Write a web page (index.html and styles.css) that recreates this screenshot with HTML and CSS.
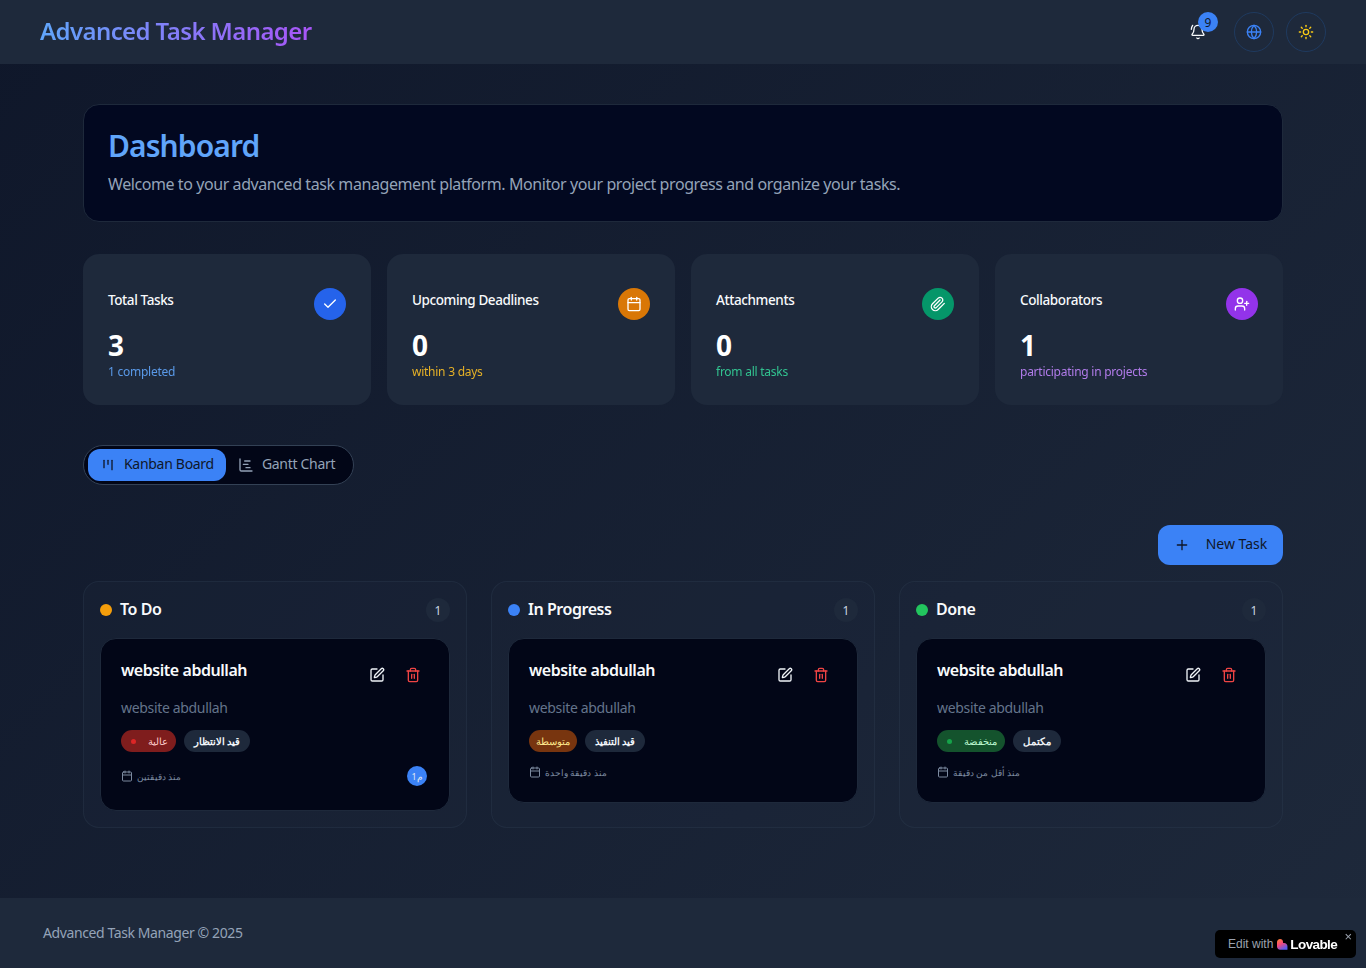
FILE: index.html
```html
<!DOCTYPE html>
<html lang="en">
<head>
  <meta charset="UTF-8" />
  <meta name="viewport" content="width=device-width, initial-scale=1.0" />
  <title>Advanced Task Manager</title>
  <link rel="stylesheet" href="styles.css">
</head>
<body>
  <svg class="sprite" aria-hidden="true">
    <symbol id="i-bell" viewBox="0 0 24 24"><path d="M10.268 21a2 2 0 0 0 3.464 0"/><path d="M22 8c0-2.3-.8-4.3-2-6"/><path d="M3.262 15.326A1 1 0 0 0 4 17h16a1 1 0 0 0 .74-1.673C19.41 13.956 18 12.499 18 8A6 6 0 0 0 6 8c0 4.499-1.411 5.956-2.738 7.326"/><path d="M4 2C2.8 3.7 2 5.7 2 8"/></symbol>
    <symbol id="i-globe" viewBox="0 0 24 24"><circle cx="12" cy="12" r="10"/><path d="M12 2a14.5 14.5 0 0 0 0 20 14.5 14.5 0 0 0 0-20"/><path d="M2 12h20"/></symbol>
    <symbol id="i-sun" viewBox="0 0 24 24"><circle cx="12" cy="12" r="4"/><path d="M12 2v2"/><path d="M12 20v2"/><path d="m4.93 4.93 1.41 1.41"/><path d="m17.66 17.66 1.41 1.41"/><path d="M2 12h2"/><path d="M20 12h2"/><path d="m6.34 17.66-1.41 1.41"/><path d="m19.07 4.93-1.41 1.41"/></symbol>
    <symbol id="i-check" viewBox="0 0 24 24"><path d="M20 6 9 17l-5-5"/></symbol>
    <symbol id="i-calendar" viewBox="0 0 24 24"><path d="M8 2v4"/><path d="M16 2v4"/><rect x="3" y="4" width="18" height="18" rx="2"/><path d="M3 10h18"/></symbol>
    <symbol id="i-clip" viewBox="0 0 24 24"><path d="m21.44 11.05-9.19 9.19a6 6 0 0 1-8.49-8.49l8.57-8.57A4 4 0 1 1 18 8.84l-8.59 8.57a2 2 0 0 1-2.83-2.83l8.49-8.48"/></symbol>
    <symbol id="i-user-plus" viewBox="0 0 24 24"><path d="M16 21v-2a4 4 0 0 0-4-4H6a4 4 0 0 0-4 4v2"/><circle cx="9" cy="7" r="4"/><path d="M19 8v6"/><path d="M22 11h-6"/></symbol>
    <symbol id="i-kanban" viewBox="0 0 24 24"><path d="M6 5v11"/><path d="M12 5v6"/><path d="M18 5v14"/></symbol>
    <symbol id="i-gantt" viewBox="0 0 24 24"><path d="M10 6h8"/><path d="M12 16h6"/><path d="M3 3v16a2 2 0 0 0 2 2h16"/><path d="M8 11h7"/></symbol>
    <symbol id="i-plus" viewBox="0 0 24 24"><path d="M5 12h14"/><path d="M12 5v14"/></symbol>
    <symbol id="i-pen" viewBox="0 0 24 24"><path d="M12 3H5a2 2 0 0 0-2 2v14a2 2 0 0 0 2 2h14a2 2 0 0 0 2-2v-7"/><path d="M18.375 2.625a1 1 0 0 1 3 3l-9.013 9.014a2 2 0 0 1-.853.505l-2.873.84a.5.5 0 0 1-.62-.62l.84-2.873a2 2 0 0 1 .506-.852z"/></symbol>
    <symbol id="i-trash" viewBox="0 0 24 24"><path d="M3 6h18"/><path d="M19 6v14c0 1-1 2-2 2H7c-1 0-2-1-2-2V6"/><path d="M8 6V4c0-1 1-2 2-2h4c1 0 2 1 2 2v2"/><path d="M10 11v6"/><path d="M14 11v6"/></symbol>
  </svg>

  <header class="topbar">
    <div class="logo">Advanced Task Manager</div>
    <div class="topbar-actions">
      <button class="bell-btn">
        <svg class="icon"><use href="#i-bell"/></svg>
        <span class="bell-count">9</span>
      </button>
      <button class="round-btn blue"><svg class="icon"><use href="#i-globe"/></svg></button>
      <button class="round-btn yellow"><svg class="icon"><use href="#i-sun"/></svg></button>
    </div>
  </header>

  <main class="page">
    <section class="hero">
      <h1>Dashboard</h1>
      <p>Welcome to your advanced task management platform. Monitor your project progress and organize your tasks.</p>
    </section>

    <section class="stats">
      <div class="stat">
        <div class="stat-head">
          <span class="stat-label">Total Tasks</span>
          <span class="stat-icon bg-blue"><svg class="icon"><use href="#i-check"/></svg></span>
        </div>
        <div class="stat-value">3</div>
        <div class="stat-sub text-blue">1 completed</div>
      </div>
      <div class="stat">
        <div class="stat-head">
          <span class="stat-label">Upcoming Deadlines</span>
          <span class="stat-icon bg-amber"><svg class="icon"><use href="#i-calendar"/></svg></span>
        </div>
        <div class="stat-value">0</div>
        <div class="stat-sub text-amber">within 3 days</div>
      </div>
      <div class="stat">
        <div class="stat-head">
          <span class="stat-label">Attachments</span>
          <span class="stat-icon bg-green"><svg class="icon"><use href="#i-clip"/></svg></span>
        </div>
        <div class="stat-value">0</div>
        <div class="stat-sub text-green">from all tasks</div>
      </div>
      <div class="stat">
        <div class="stat-head">
          <span class="stat-label">Collaborators</span>
          <span class="stat-icon bg-purple"><svg class="icon"><use href="#i-user-plus"/></svg></span>
        </div>
        <div class="stat-value">1</div>
        <div class="stat-sub text-purple">participating in projects</div>
      </div>
    </section>

    <div class="tabs">
      <button class="tab active"><svg class="icon"><use href="#i-kanban"/></svg><span>Kanban Board</span></button>
      <button class="tab"><svg class="icon"><use href="#i-gantt"/></svg><span>Gantt Chart</span></button>
    </div>

    <div class="toolbar">
      <button class="new-task"><svg class="icon"><use href="#i-plus"/></svg><span>New Task</span></button>
    </div>

    <section class="board">
      <div class="column">
        <div class="column-head">
          <span class="dot dot-amber"></span>
          <h2>To Do</h2>
          <span class="count">1</span>
        </div>
        <article class="task">
          <div class="task-head">
            <h3>website abdullah</h3>
            <div class="task-actions">
              <button class="task-btn"><svg class="icon"><use href="#i-pen"/></svg></button>
              <button class="task-btn danger"><svg class="icon"><use href="#i-trash"/></svg></button>
            </div>
          </div>
          <p class="task-desc">website abdullah</p>
          <div class="badges">
            <span class="badge badge-high"><i class="badge-dot"></i><span lang="ar">عالية</span></span>
            <span class="badge badge-status" lang="ar">قيد الانتظار</span>
          </div>
          <div class="task-meta tall">
            <span class="task-date"><svg class="icon icon-12"><use href="#i-calendar"/></svg><span lang="ar">منذ دقيقتين</span></span>
            <span class="avatar" lang="ar">م1</span>
          </div>
        </article>
      </div>

      <div class="column">
        <div class="column-head">
          <span class="dot dot-blue"></span>
          <h2>In Progress</h2>
          <span class="count">1</span>
        </div>
        <article class="task">
          <div class="task-head">
            <h3>website abdullah</h3>
            <div class="task-actions">
              <button class="task-btn"><svg class="icon"><use href="#i-pen"/></svg></button>
              <button class="task-btn danger"><svg class="icon"><use href="#i-trash"/></svg></button>
            </div>
          </div>
          <p class="task-desc">website abdullah</p>
          <div class="badges">
            <span class="badge badge-medium" lang="ar">متوسطة</span>
            <span class="badge badge-status" lang="ar">قيد التنفيذ</span>
          </div>
          <div class="task-meta">
            <span class="task-date"><svg class="icon icon-12"><use href="#i-calendar"/></svg><span lang="ar">منذ دقيقة واحدة</span></span>
          </div>
        </article>
      </div>

      <div class="column">
        <div class="column-head">
          <span class="dot dot-green"></span>
          <h2>Done</h2>
          <span class="count">1</span>
        </div>
        <article class="task">
          <div class="task-head">
            <h3>website abdullah</h3>
            <div class="task-actions">
              <button class="task-btn"><svg class="icon"><use href="#i-pen"/></svg></button>
              <button class="task-btn danger"><svg class="icon"><use href="#i-trash"/></svg></button>
            </div>
          </div>
          <p class="task-desc">website abdullah</p>
          <div class="badges">
            <span class="badge badge-low"><i class="badge-dot"></i><span lang="ar">منخفضة</span></span>
            <span class="badge badge-status" lang="ar">مكتمل</span>
          </div>
          <div class="task-meta">
            <span class="task-date"><svg class="icon icon-12"><use href="#i-calendar"/></svg><span lang="ar">منذ أقل من دقيقة</span></span>
          </div>
        </article>
      </div>
    </section>
  </main>

  <footer class="footer"><span>Advanced Task Manager © 2025</span></footer>

  <a class="lovable">
    <span class="lovable-edit">Edit with</span>
    <svg class="lovable-heart" viewBox="0 0 12 12">
      <defs>
        <linearGradient id="heart" x1="0" y1="0" x2="0.6" y2="1">
          <stop offset="0" stop-color="#ff8a2b"/>
          <stop offset="0.5" stop-color="#f5477a"/>
          <stop offset="1" stop-color="#5a5cf0"/>
        </linearGradient>
      </defs>
      <path fill="url(#heart)" d="M3.4 0C5.2 0 6.6 1.4 6.6 3.2V4.4H7.8C9.8 4.4 11.4 6 11.4 8V11.6H3.4C1.5 11.6 0 10.1 0 8.2V3.4C0 1.5 1.5 0 3.4 0Z"/>
    </svg>
    <span class="lovable-name">Lovable</span>
    <span class="lovable-close">×</span>
  </a>
</body>
</html>
```

FILE: styles.css
```css
* { box-sizing: border-box; }
html, body { margin: 0; padding: 0; }
body { min-height: 100vh; display: flex; flex-direction: column; font-family: "Noto Sans", sans-serif; background: linear-gradient(135deg, #0f172a, #1e293b); color: #f8fafc; }
button { font: inherit; background: none; border: none; color: inherit; padding: 0; cursor: pointer; }
h1, h2, h3, p { margin: 0; }
.sprite { display: none; }

.icon { width: 16px; height: 16px; fill: none; stroke: currentColor; stroke-width: 2; stroke-linecap: round; stroke-linejoin: round; flex-shrink: 0; }
.icon-12 { width: 12px; height: 12px; }

.topbar { height: 64px; padding: 0 40px; display: flex; align-items: center; justify-content: space-between; background: #1e293b; }
.logo { padding-bottom: 4px; font-size: 24px; font-weight: 600; letter-spacing: -0.6px; background: linear-gradient(90deg, #60a5fa, #a855f7); -webkit-background-clip: text; background-clip: text; color: transparent; }
.topbar-actions { display: flex; align-items: center; gap: 12px; }
.bell-btn { position: relative; width: 40px; height: 40px; margin-right: 4px; display: flex; align-items: center; justify-content: center; color: #f8fafc; }
.bell-count { position: absolute; top: 0; right: 0; width: 20px; height: 20px; border-radius: 50%; background: #3b82f6; color: #0f172a; font-size: 12px; display: flex; align-items: center; justify-content: center; }
.round-btn { width: 40px; height: 40px; border-radius: 50%; border: 1px solid #1e3a5f; display: flex; align-items: center; justify-content: center; }
.round-btn.blue { color: #3b82f6; }
.round-btn.yellow { color: #facc15; }

.page { flex: 1; width: 1200px; margin: 0 auto; padding: 40px 0 70px; }

.hero { height: 118px; padding: 23px 24px 24px; border: 1px solid #1e293b; border-radius: 16px; background: #020820; }
.hero h1 { font-size: 30px; line-height: 36px; font-weight: 600; letter-spacing: -0.9px; color: #60a5fa; }
.hero p { margin-top: 8px; font-size: 16px; line-height: 24px; color: #94a3b8; letter-spacing: -0.42px; }

.stats { margin-top: 32px; display: grid; grid-template-columns: repeat(4, 1fr); gap: 16px; }
.stat { height: 151px; padding: 34px 25px 0; border-radius: 16px; background: #1e293b; }
.stat-head { display: flex; justify-content: space-between; align-items: flex-start; }
.stat-label { font-size: 13.5px; line-height: 24px; font-weight: 500; color: #f8fafc; letter-spacing: -0.4px; }
.stat-icon { width: 32px; height: 32px; border-radius: 50%; display: flex; align-items: center; justify-content: center; color: #fff; }
.stat-value { margin-top: 7px; font-size: 28px; line-height: 36px; font-weight: 700; color: #fff; }
.stat-sub { font-size: 12px; line-height: 18px; letter-spacing: -0.25px; opacity: 0.9; }
.bg-blue { background: #2563eb; }
.bg-amber { background: #d97706; }
.bg-green { background: #059669; }
.bg-purple { background: #9333ea; }
.text-blue { color: #60a5fa; }
.text-amber { color: #fbbf24; }
.text-green { color: #34d399; }
.text-purple { color: #c084fc; }

.tabs { margin-top: 40px; width: 271px; height: 40px; padding: 3px 4px; display: flex; border: 1px solid #334155; border-radius: 20px; background: #020617; }
.tab { height: 32px; padding: 0 12px; display: flex; align-items: center; gap: 8px; font-size: 14px; letter-spacing: -0.3px; border-radius: 12px; color: #94a3b8; white-space: nowrap; }
.tab span { padding-bottom: 3px; }
.tab.active { background: #3b82f6; color: #0f172a; }

.toolbar { margin-top: 40px; display: flex; justify-content: flex-end; }
.new-task { width: 125px; height: 40px; display: flex; align-items: center; justify-content: center; gap: 16px; border-radius: 12px; background: #3b82f6; color: #0f172a; font-size: 14px; }
.new-task span { padding-bottom: 3px; }

.board { margin-top: 16px; display: grid; grid-template-columns: repeat(3, 1fr); gap: 24px; }
.column { padding: 16px; border: 1px solid rgba(51, 65, 85, 0.3); border-radius: 16px; background: rgba(30, 41, 59, 0.3); }
.column-head { height: 24px; margin-bottom: 16px; display: flex; align-items: center; gap: 8px; }
.column-head h2 { flex: 1; margin-top: -2px; font-size: 16px; line-height: 24px; font-weight: 600; letter-spacing: -0.45px; color: #f8fafc; }
.dot { width: 12px; height: 12px; border-radius: 50%; }
.dot-amber { background: #f59e0b; }
.dot-blue { background: #3b82f6; }
.dot-green { background: #22c55e; }
.count { width: 24px; height: 24px; border-radius: 50%; background: #1e293b; color: #cbd5e1; font-size: 12px; display: flex; align-items: center; justify-content: center; }

.task { padding: 20px 20px 23px; border: 1px solid #1e293b; border-radius: 16px; background: #020617; }
.task-head { display: flex; justify-content: space-between; align-items: flex-start; }
.task-head h3 { margin-top: 1px; font-size: 16px; line-height: 20px; font-weight: 600; letter-spacing: -0.45px; color: #f8fafc; }
.task-actions { display: flex; gap: 4px; }
.task-btn { width: 32px; height: 32px; display: flex; align-items: center; justify-content: center; color: #f1f5f9; }
.task-btn.danger { color: #ef4444; }
.task-desc { margin-top: 7px; font-size: 14px; line-height: 20px; letter-spacing: -0.33px; color: #64748b; }
.badges { margin-top: 12px; display: flex; gap: 8px; }
.badge { height: 22px; padding: 0 10px; display: flex; align-items: center; gap: 12px; border-radius: 11px; font-size: 9.5px; font-weight: 700; color: #f1f5f9; white-space: nowrap; }
.badge-dot { width: 5px; height: 5px; border-radius: 50%; }
.badge-high { padding-right: 8px; font-size: 10px; background: #7f1d1d; color: #fecaca; font-weight: 400; }
.badge-high .badge-dot { background: #dc2626; }
.badge-medium { padding: 0 7px; background: #78350f; color: #fde68a; font-weight: 400; }
.badge-low { padding-right: 8px; font-size: 10px; background: #14532d; color: #bbf7d0; font-weight: 400; }
.badge-low .badge-dot { background: #16a34a; }
.badge-status { background: #1e293b; }

.task-meta { margin-top: 13px; min-height: 14px; display: flex; justify-content: space-between; align-items: center; color: #7c8aa0; font-size: 9px; }
.task-meta.tall { margin-top: 14px; margin-bottom: 1px; }
.task-date { display: flex; align-items: center; gap: 4px; }
.avatar { width: 20px; height: 20px; margin-right: 2px; border-radius: 50%; background: #3b82f6; color: #e2e8f0; font-size: 9px; display: flex; align-items: center; justify-content: center; }

.footer { height: 70px; padding: 0 43px; display: flex; align-items: center; background: #1e293b; color: #94a3b8; font-size: 14px; letter-spacing: -0.4px; }
.footer span { padding-bottom: 2px; }

.lovable { position: fixed; right: 10px; bottom: 10px; width: 141px; height: 28px; padding-left: 13px; display: flex; align-items: center; border-radius: 5px; background: #000; font-family: "Liberation Sans", sans-serif; color: #fff; }
.lovable-edit { font-size: 12px; color: #9ca3af; margin-right: 4px; }
.lovable-heart { width: 11px; height: 11px; margin-right: 2px; }
.lovable-name { font-size: 13.5px; font-weight: 700; letter-spacing: -0.6px; }
.lovable-close { position: absolute; top: 0; right: 4px; font-size: 13px; line-height: 14px; color: #9ca3af; }
```
